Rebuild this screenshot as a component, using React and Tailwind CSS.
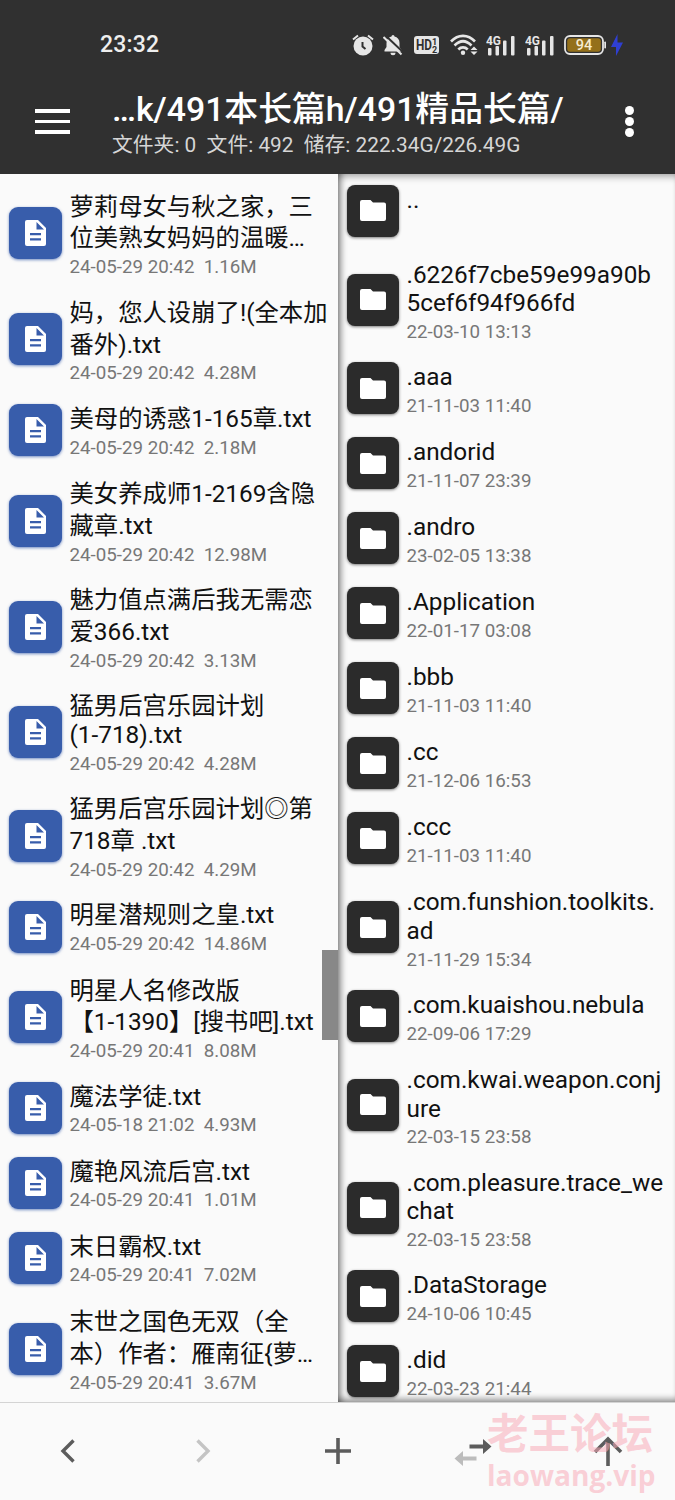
const files = [
  { lines: ['萝莉母女与秋之家，三', '位美熟女妈妈的温暖…'], meta: '24-05-29 20:42  1.16M', tall: true },
  { lines: ['妈，您人设崩了!(全本加', '番外).txt'], meta: '24-05-29 20:42  4.28M', tall: true },
  { lines: ['美母的诱惑1-165章.txt'], meta: '24-05-29 20:42  2.18M' },
  { lines: ['美女养成师1-2169含隐', '藏章.txt'], meta: '24-05-29 20:42  12.98M', tall: true },
  { lines: ['魅力值点满后我无需恋', '爱366.txt'], meta: '24-05-29 20:42  3.13M', tall: true },
  { lines: ['猛男后宫乐园计划', '(1-718).txt'], meta: '24-05-29 20:42  4.28M' },
  { lines: ['猛男后宫乐园计划◎第', '718章 .txt'], meta: '24-05-29 20:42  4.29M', tall: true },
  { lines: ['明星潜规则之皇.txt'], meta: '24-05-29 20:42  14.86M' },
  { lines: ['明星人名修改版', '【1-1390】[搜书吧].txt'], meta: '24-05-29 20:41  8.08M', tall: true },
  { lines: ['魔法学徒.txt'], meta: '24-05-18 21:02  4.93M' },
  { lines: ['魔艳风流后宫.txt'], meta: '24-05-29 20:41  1.01M' },
  { lines: ['末日霸权.txt'], meta: '24-05-29 20:41  7.02M' },
  { lines: ['末世之国色无双（全', '本）作者：雁南征{萝…'], meta: '24-05-29 20:41  3.67M', tall: true },
]

const folders = [
  { lines: ['..'], meta: '' },
  { lines: ['.6226f7cbe59e99a90b', '5cef6f94f966fd'], meta: '22-03-10 13:13' },
  { lines: ['.aaa'], meta: '21-11-03 11:40' },
  { lines: ['.andorid'], meta: '21-11-07 23:39' },
  { lines: ['.andro'], meta: '23-02-05 13:38' },
  { lines: ['.Application'], meta: '22-01-17 03:08' },
  { lines: ['.bbb'], meta: '21-11-03 11:40' },
  { lines: ['.cc'], meta: '21-12-06 16:53' },
  { lines: ['.ccc'], meta: '21-11-03 11:40' },
  { lines: ['.com.funshion.toolkits.', 'ad'], meta: '21-11-29 15:34' },
  { lines: ['.com.kuaishou.nebula'], meta: '22-09-06 17:29' },
  { lines: ['.com.kwai.weapon.conj', 'ure'], meta: '22-03-15 23:58' },
  { lines: ['.com.pleasure.trace_we', 'chat'], meta: '22-03-15 23:58' },
  { lines: ['.DataStorage'], meta: '24-10-06 10:45' },
  { lines: ['.did'], meta: '22-03-23 21:44' },
]

function FileIcon() {
  return (
    <div className="flex h-[52px] w-[53px] shrink-0 items-center justify-center rounded-[9px] bg-[#385dab] shadow-[0_1px_3px_rgba(56,93,171,0.7)]">
      <svg width="21" height="26" viewBox="0 0 21 26">
        <path fill="#fff" d="M2 0H13L21 8V24a2 2 0 0 1-2 2H2a2 2 0 0 1-2-2V2a2 2 0 0 1 2-2Z" />
        <path fill="#385dab" d="M11.500 2V9.500H19ZM5 13H16v2.200H5ZM5 18.300H16v2.200H5Z" />
      </svg>
    </div>
  )
}

function FolderIcon() {
  return (
    <div className="flex h-[52px] w-[52px] shrink-0 items-center justify-center rounded-[8px] bg-[#2b2b2b] shadow-[0_1px_3px_rgba(0,0,0,0.5)]">
      <svg width="26" height="21" viewBox="0 0 26 21">
        <path fill="#fff" d="M2 0H10.500L13 2.600H24a2 2 0 0 1 2 2V19a2 2 0 0 1-2 2H2a2 2 0 0 1-2-2V2a2 2 0 0 1 2-2Z" />
      </svg>
    </div>
  )
}

function Row({ item, icon }) {
  const height = item.tall ? 'h-[106.3px]' : item.lines.length > 1 ? 'h-[102.7px]' : 'h-[75px]'
  return (
    <li className={`flex shrink-0 items-center gap-[7.5px] ${height}`}>
      {icon}
      <div className={`self-start whitespace-pre ${item.tall ? 'pt-[10.5px]' : 'pt-[12.3px]'}`}>
        {item.lines.map((line) => (
          <p
            key={line}
            className={`text-[24.35px] text-[#111] ${item.tall ? 'h-[31.8px] leading-[31.8px]' : 'h-[28.7px] leading-[28.7px]'}`}
          >
            {line}
          </p>
        ))}
        <p className={`text-[18.75px] leading-[22px] text-[#777] ${item.tall ? 'mt-[2px]' : 'mt-[3px]'}`}>{item.meta}</p>
      </div>
    </li>
  )
}

function Signal() {
  return (
    <svg width="30" height="22" viewBox="0 0 30 22" fill="#e6e6e6">
      <text x="0" y="10.500" fontSize="13" fontWeight="700" textLength="15" lengthAdjust="spacingAndGlyphs">4G</text>
      <rect x="2" y="14" width="3.500" height="7.500" rx="1" />
      <rect x="9.500" y="12" width="3.500" height="9.500" rx="1" />
      <rect x="17" y="6.500" width="3.500" height="15" rx="1" />
      <rect x="25" y="2" width="3.500" height="19.500" rx="1" />
    </svg>
  )
}

function StatusBar() {
  return (
    <div className="flex h-[88px] items-center pl-[100px] pt-[1px]">
      <span className="w-[252px] pt-[2px] text-[23px] font-medium tracking-[0.2px] text-[#eee]">23:32</span>
      <svg width="22" height="22" viewBox="0 0 22 22" fill="none" stroke="#e6e6e6" strokeWidth="2">
        <circle cx="11" cy="12" r="9.500" fill="#e6e6e6" stroke="none" />
        <path d="M1 5.500 6 1.500M21 5.500 16 1.500" />
        <path stroke="#303030" d="M10.500 8V12.500L13.500 15" />
      </svg>
      <svg className="ml-[9px]" width="20" height="22" viewBox="0 0 20 22">
        <path fill="#e6e6e6" d="M10 1a1.500 1.500 0 0 1 1.500 1.500C14.500 3.300 16.500 5.500 16.500 9v4l2 3v1.500H1.500V16l2-3V9c0-3.500 2-5.700 5-6.500A1.500 1.500 0 0 1 10 1ZM7.500 18.800h5a2.500 2.500 0 0 1-5 0Z" />
        <path stroke="#303030" strokeWidth="2" d="M2.500 1.500 20.500 18.500" />
        <path stroke="#e6e6e6" strokeWidth="2" d="M0.500 3 18.500 20.500" />
      </svg>
      <svg className="ml-[11px]" width="25" height="20" viewBox="0 0 25 20">
        <rect y="1" width="25" height="18" rx="3" fill="#e6e6e6" />
        <g fill="#303030" fontWeight="700">
          <text x="2" y="15" fontSize="14" textLength="16" lengthAdjust="spacingAndGlyphs">HD</text>
          <text x="18" y="9.500" fontSize="9">1</text>
          <text x="18" y="17.500" fontSize="9">2</text>
        </g>
      </svg>
      <svg className="ml-[11px]" width="28" height="22" viewBox="0 0 28 22" fill="none" stroke="#e6e6e6" strokeWidth="2.600">
        <path d="M1 7.500C8 0 18 0 25 7.500M4.500 11.500C10 6 16 6 21.500 11.500M8.300 15.500C11 12.700 15 12.700 17.700 15.500" />
        <circle cx="13" cy="18.800" r="2.200" fill="#e6e6e6" stroke="none" />
        <path fill="#e6e6e6" stroke="none" d="M24 12.500 27.500 16H20.500ZM20.500 17.500H27.500L24 21Z" />
      </svg>
      <div className="ml-[8px]"><Signal /></div>
      <div className="ml-[9px]"><Signal /></div>
      <svg className="ml-[9px]" width="42" height="20" viewBox="0 0 42 20">
        <rect x="1" y="1" width="38" height="18" rx="5" fill="#303030" stroke="#e6e6e6" strokeWidth="1.800" />
        <rect x="3.200" y="3.200" width="33.600" height="13.600" rx="3" fill="#94701a" />
        <rect x="40.300" y="6.500" width="1.700" height="7" rx="0.800" fill="#e6e6e6" />
        <text x="20" y="15" fill="#f7ecd2" fontSize="14.500" fontWeight="500" textAnchor="middle">94</text>
      </svg>
      <svg className="ml-[5px]" width="12" height="22" viewBox="0 0 12 22">
        <path fill="#2f3fd2" d="M6.500 0V8.500H12L5 22V13H0Z" />
      </svg>
    </div>
  )
}

function Footer() {
  return (
    <footer className="relative grid h-[98px] grid-cols-5 place-items-center border-t border-[#d4d4d4] bg-[#fafafa] pb-[2px]">
      <svg width="16" height="24" viewBox="0 0 16 24" fill="none" stroke="#5c5c5c" strokeWidth="3.400">
        <path d="M13.500 1.500 3 12 13.500 22.500" />
      </svg>
      <svg width="16" height="24" viewBox="0 0 16 24" fill="none" stroke="#c4c4c4" strokeWidth="3.400">
        <path d="M2.500 1.500 13 12 2.500 22.500" />
      </svg>
      <svg width="28" height="28" viewBox="0 0 28 28" stroke="#5c5c5c" strokeWidth="3.600">
        <path d="M14 1V27M1 14H27" />
      </svg>
      <svg width="38" height="30" viewBox="0 0 38 30">
        <path fill="#5c5c5c" d="M15.500 8.500H29V3L37.500 10.500 29 18V12.500H15.500Z" />
        <path fill="#bcbcbc" d="M22.500 20.500H9V15L0.500 22.500 9 30V24.500H22.500Z" />
      </svg>
      <svg width="30" height="30" viewBox="0 0 30 30" fill="none" stroke="#5c5c5c" strokeWidth="3.600">
        <path d="M15 30V4M2 16 15 3 28 16" />
      </svg>
      <div className="absolute left-[487px] top-[6px] whitespace-nowrap font-bold text-[#f9aab8]/55">
        <p className="h-[52px] text-[41.5px] leading-[52px]">老王论坛</p>
        <p className="h-[28px] font-['Open_Sans',sans-serif] text-[28.1px] leading-[28px]">laowang.vip</p>
      </div>
    </footer>
  )
}

export default function App() {
  return (
    <div className="flex h-[1500px] w-[675px] flex-col overflow-hidden bg-[#fafafa] font-[Roboto,'Noto_Sans_CJK_SC',sans-serif]">
      <header className="h-[174px] shrink-0 bg-[#303030]">
        <StatusBar />
        <div className="flex items-start">
          <div className="ml-[35px] mt-[21px] flex w-[35px] flex-col gap-[7px]">
            <span className="h-[3.5px] bg-white" />
            <span className="h-[3.5px] bg-white" />
            <span className="h-[3.5px] bg-white" />
          </div>
          <div className="ml-[42px] w-[513px] whitespace-pre">
            <h1 className="text-[33.8px] font-medium leading-[43px] text-white">…k/491本长篇h/491精品长篇/</h1>
            <p className="text-[20.8px] leading-[29px] text-[#d6d6d6]">文件夹: 0  文件: 492  储存: 222.34G/226.49G</p>
          </div>
          <div className="mt-[18px] flex flex-col gap-[2.5px]">
            <span className="size-[8.5px] rounded-full bg-white" />
            <span className="size-[8.5px] rounded-full bg-white" />
            <span className="size-[8.5px] rounded-full bg-white" />
          </div>
        </div>
      </header>
      <main className="flex h-[1228px] shrink-0 overflow-hidden">
        <section className="relative w-[338px] overflow-hidden">
          <ul className="flex flex-col pl-[9px] pt-[6px]">
            {files.map((item) => (
              <Row key={item.lines[0]} item={item} icon={<FileIcon />} />
            ))}
          </ul>
          <div className="absolute right-0 top-[776px] h-[90px] w-[16px] bg-[#888]" />
        </section>
        <section className="flex-1 overflow-hidden shadow-[inset_7px_0_6px_-4px_rgba(0,0,0,0.45),inset_0_8px_7px_-5px_rgba(0,0,0,0.3),inset_0_-7px_6px_-4px_rgba(0,0,0,0.4)]">
          <ul className="-mt-[0.8px] flex flex-col pl-[9px]">
            {folders.map((item) => (
              <Row key={item.lines[0]} item={item} icon={<FolderIcon />} />
            ))}
          </ul>
        </section>
      </main>
      <Footer />
    </div>
  )
}
